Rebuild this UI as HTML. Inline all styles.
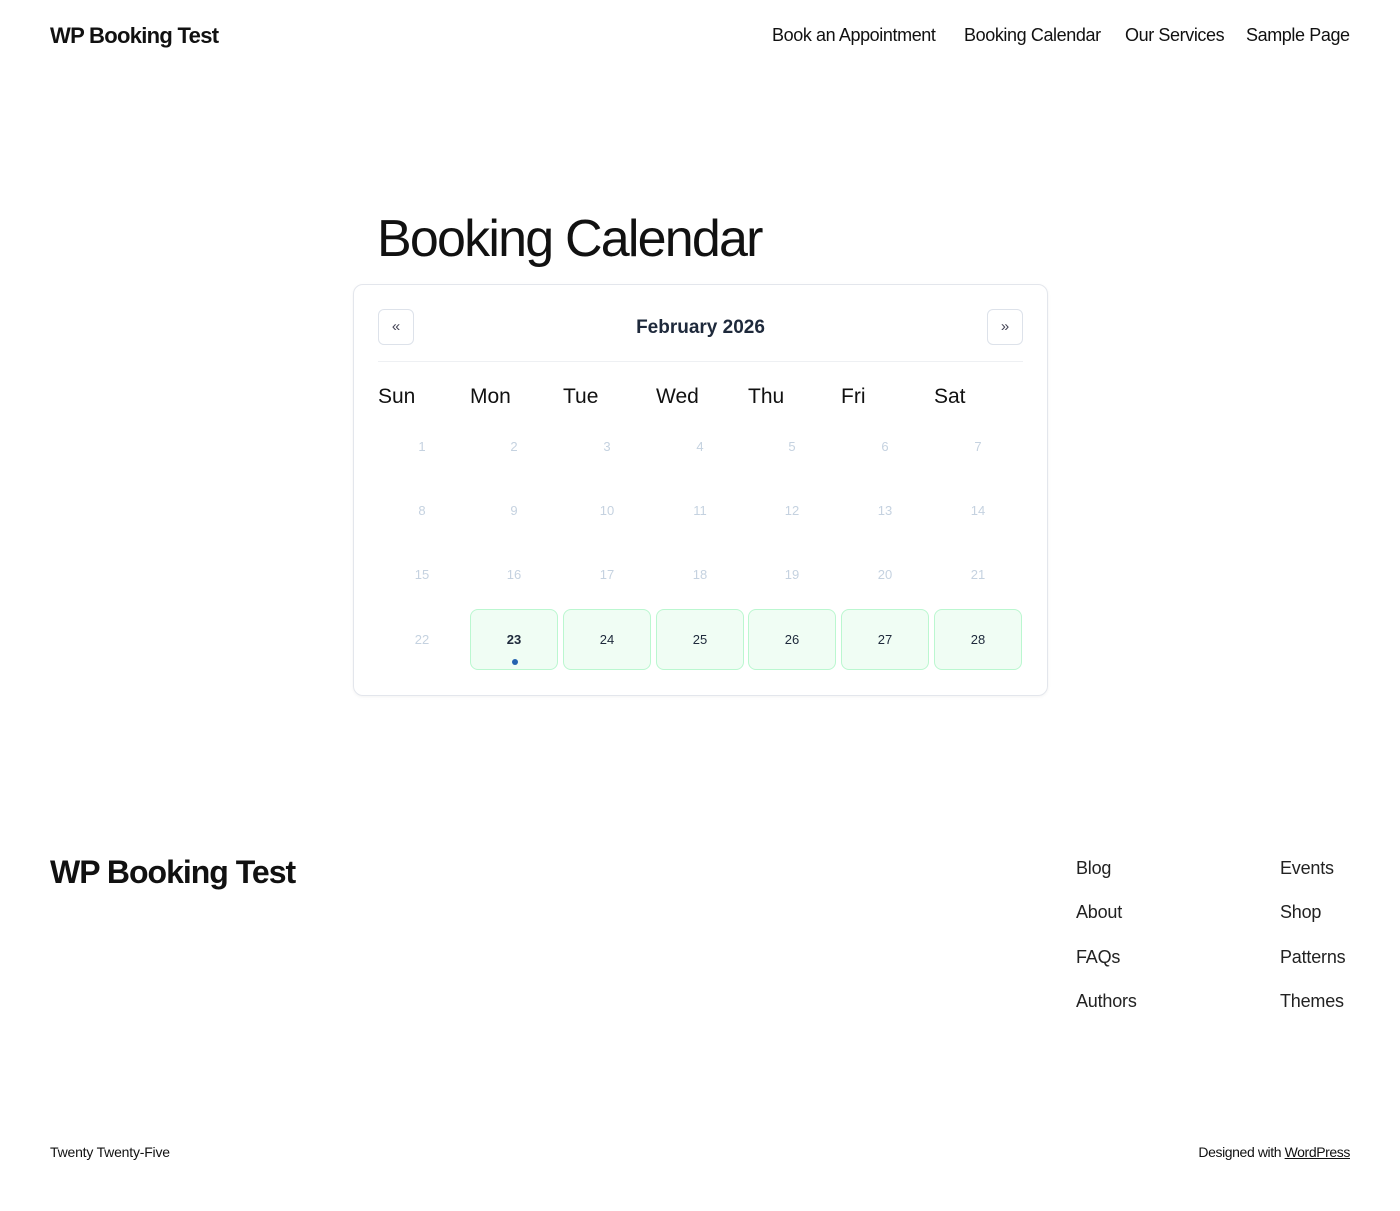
<!DOCTYPE html>
<html><head><meta charset="utf-8"><style>
*{margin:0;padding:0;box-sizing:border-box}
body{width:1400px;height:1211px;background:#fff;font-family:"Liberation Sans",sans-serif;color:#111;position:relative;overflow:hidden}
.a{position:absolute;white-space:nowrap}
.nav{font-size:18px;letter-spacing:-0.4px;top:25px}
.card{position:absolute;left:353px;top:284px;width:695px;height:412px;border:1px solid #e3e6ec;border-radius:10px;box-shadow:0 1px 3px rgba(0,0,0,.05)}
.btn{position:absolute;top:24px;width:36px;height:36px;border:1px solid #dde2ea;border-radius:6px;text-align:center;line-height:33px;font-size:15px;color:#445}
.hr{position:absolute;left:24px;right:24px;top:76px;border-top:1px solid #eef0f3}
.dh{position:absolute;top:100px;font-size:21px;color:#111}
.d{position:absolute;width:88px;height:61px;text-align:center;line-height:61px;font-size:13px;color:#c5d2e0}
.g{background:#f0fdf4;border:1px solid #bbf7d0;border-radius:8px;color:#1e293b;line-height:59px}
.f{font-size:18px;letter-spacing:-0.2px;color:#222}
</style></head><body>
<div class="a" style="left:50px;top:23px;font-size:22px;font-weight:bold;letter-spacing:-0.7px">WP Booking Test</div>
<div class="a nav" style="left:772px">Book an Appointment</div>
<div class="a nav" style="left:964px">Booking Calendar</div>
<div class="a nav" style="left:1125px">Our Services</div>
<div class="a nav" style="left:1246px">Sample Page</div>
<div class="a" style="left:377px;top:209px;font-size:52px;letter-spacing:-1.8px">Booking Calendar</div>
<div class="card">
<div class="btn" style="left:24px">«</div>
<div class="btn" style="left:633px">»</div>
<div class="a" style="left:0;right:0;top:32px;text-align:center;font-size:19px;font-weight:bold;color:#1e293b">February 2026</div>
<div class="hr"></div>
<div class="dh" style="left:24px">Sun</div><div class="dh" style="left:116px">Mon</div><div class="dh" style="left:209px">Tue</div><div class="dh" style="left:302px">Wed</div><div class="dh" style="left:394px">Thu</div><div class="dh" style="left:487px">Fri</div><div class="dh" style="left:580px">Sat</div>
<div class="d" style="left:24px;top:131px">1</div><div class="d" style="left:116px;top:131px">2</div><div class="d" style="left:209px;top:131px">3</div><div class="d" style="left:302px;top:131px">4</div><div class="d" style="left:394px;top:131px">5</div><div class="d" style="left:487px;top:131px">6</div><div class="d" style="left:580px;top:131px">7</div>
<div class="d" style="left:24px;top:195px">8</div><div class="d" style="left:116px;top:195px">9</div><div class="d" style="left:209px;top:195px">10</div><div class="d" style="left:302px;top:195px">11</div><div class="d" style="left:394px;top:195px">12</div><div class="d" style="left:487px;top:195px">13</div><div class="d" style="left:580px;top:195px">14</div>
<div class="d" style="left:24px;top:259px">15</div><div class="d" style="left:116px;top:259px">16</div><div class="d" style="left:209px;top:259px">17</div><div class="d" style="left:302px;top:259px">18</div><div class="d" style="left:394px;top:259px">19</div><div class="d" style="left:487px;top:259px">20</div><div class="d" style="left:580px;top:259px">21</div>
<div class="d" style="left:24px;top:324px">22</div>
<div class="d g" style="left:116px;top:324px;font-weight:bold">23<span style="position:absolute;left:41px;top:49px;width:6px;height:6px;border-radius:50%;background:#2563b0"></span></div>
<div class="d g" style="left:209px;top:324px">24</div><div class="d g" style="left:302px;top:324px">25</div><div class="d g" style="left:394px;top:324px">26</div><div class="d g" style="left:487px;top:324px">27</div><div class="d g" style="left:580px;top:324px">28</div>
</div>
<div class="a" style="left:50px;top:854px;font-size:32px;font-weight:bold;letter-spacing:-1px">WP Booking Test</div>
<div class="a f" style="left:1076px;top:858px">Blog</div>
<div class="a f" style="left:1076px;top:902px">About</div>
<div class="a f" style="left:1076px;top:947px">FAQs</div>
<div class="a f" style="left:1076px;top:991px">Authors</div>
<div class="a f" style="left:1280px;top:858px">Events</div>
<div class="a f" style="left:1280px;top:902px">Shop</div>
<div class="a f" style="left:1280px;top:947px">Patterns</div>
<div class="a f" style="left:1280px;top:991px">Themes</div>
<div class="a" style="left:50px;top:1144px;font-size:14px;letter-spacing:-0.2px">Twenty Twenty-Five</div>
<div class="a" style="right:50px;top:1144px;font-size:14px;letter-spacing:-0.4px">Designed with <u>WordPress</u></div>
</body></html>
